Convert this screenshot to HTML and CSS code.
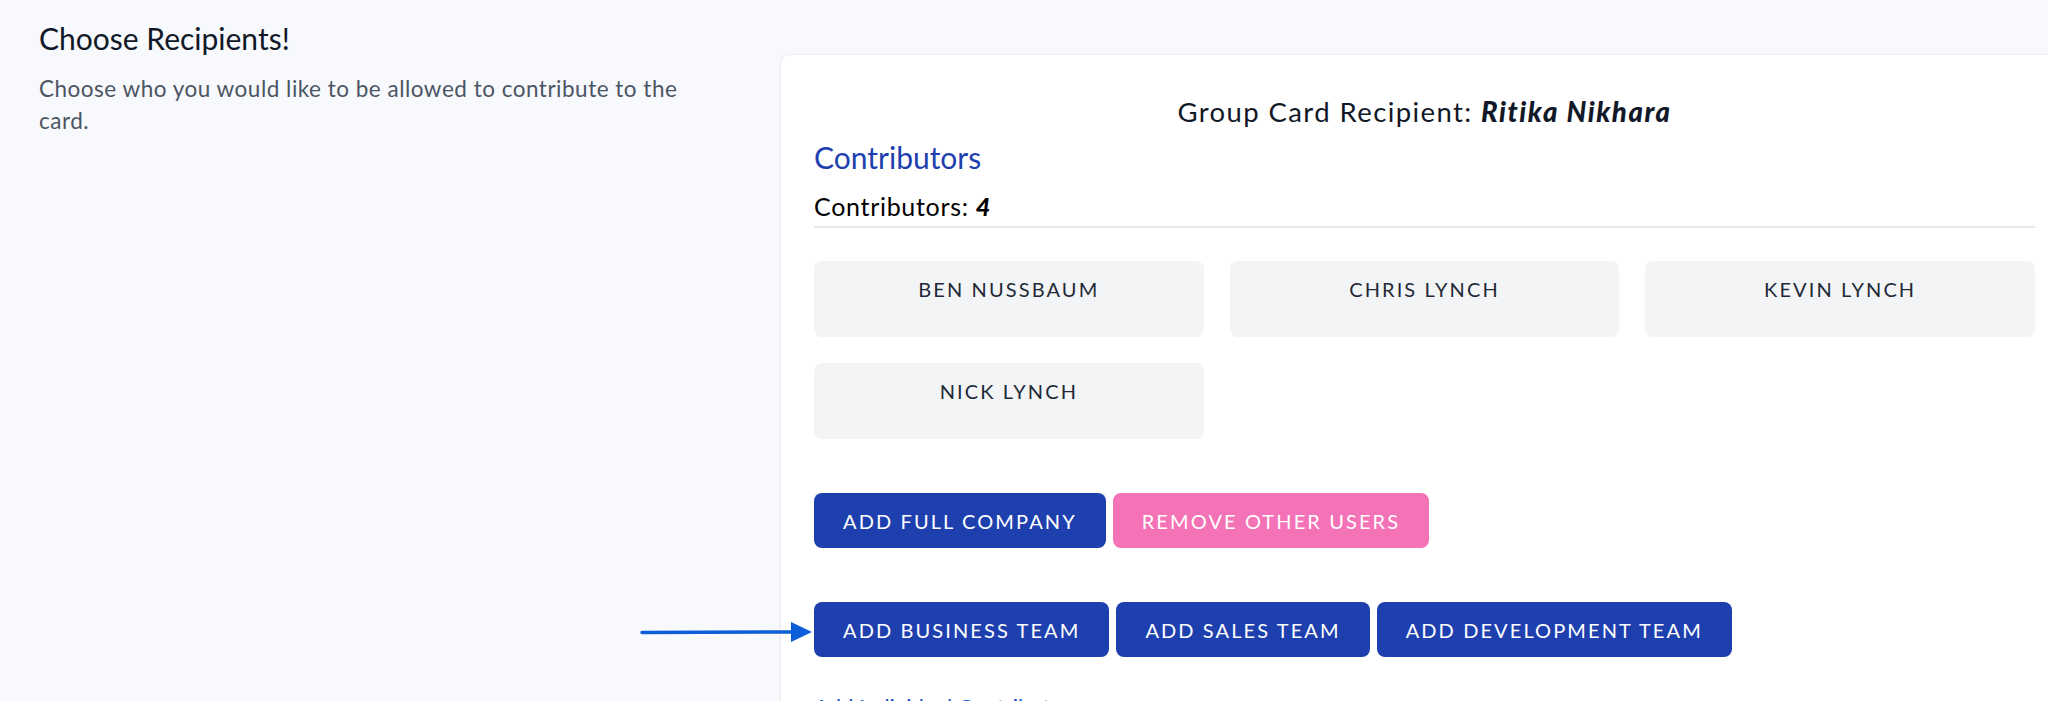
FILE: index.html
```html
<!DOCTYPE html>
<html lang="en">
<head>
<meta charset="utf-8">
<title>Choose Recipients</title>
<link rel="stylesheet" href="styles.css">
</head>
<body>
<div class="page">
  <section class="intro">
    <h2 class="intro-title">Choose Recipients!</h2>
    <p class="intro-text">Choose who you would like to be allowed to contribute to the card.</p>
  </section>

  <section class="card">
    <h3 class="recipient">Group Card Recipient: <strong>Ritika Nikhara</strong></h3>
    <h4 class="section-title">Contributors</h4>
    <div class="count">Contributors: <strong>4</strong></div>

    <div class="people">
      <div class="person">BEN NUSSBAUM</div>
      <div class="person">CHRIS LYNCH</div>
      <div class="person">KEVIN LYNCH</div>
      <div class="person">NICK LYNCH</div>
    </div>

    <div class="actions first">
      <button class="btn btn-blue">ADD FULL COMPANY</button>
      <button class="btn btn-pink">REMOVE OTHER USERS</button>
    </div>

    <div class="actions second">
      <button class="btn btn-blue">ADD BUSINESS TEAM</button>
      <button class="btn btn-blue">ADD SALES TEAM</button>
      <button class="btn btn-blue">ADD DEVELOPMENT TEAM</button>
    </div>

    <a class="more-link">Add Individual Contributors</a>
  </section>

  <svg class="pointer" width="174" height="26" viewBox="0 0 174 26" aria-hidden="true">
    <path d="M2 13.5 L154 13" stroke="#0b5ed7" stroke-width="3.5" fill="none" stroke-linecap="round"/>
    <path d="M151 3 L172 13 L151 23 Z" fill="#0b5ed7"/>
  </svg>
</div>
</body>
</html>
```

FILE: styles.css
```css
html, body {
  margin: 0;
  padding: 0;
  overflow: hidden;
}

body {
  background: #f8f9fd;
  font-family: "Lato", "Noto Sans", sans-serif;
  color: #111827;
}

.page {
  position: relative;
  display: flex;
  align-items: flex-start;
  width: 2100px;
  padding-top: 20px;
}

.intro {
  width: 781px;
  flex: none;
  box-sizing: border-box;
  padding-left: 39px;
  padding-right: 40px;
}

.intro-title {
  margin: 0;
  font-size: 30px;
  line-height: 36px;
  font-weight: 400;
  color: #111827;
}

.intro-text {
  margin: 17px 0 0;
  font-size: 22.5px;
  line-height: 32px;
  letter-spacing: 0.5px;
  color: #4b5563;
  max-width: 665px;
}

.card {
  flex: none;
  width: 1287px;
  box-sizing: border-box;
  margin-top: 35px;
  background: #ffffff;
  border-radius: 8px;
  box-shadow: 0 0 2px rgba(17, 24, 39, 0.12), 0 1px 3px rgba(17, 24, 39, 0.06);
  padding: 41px 33px 20px;
  height: 700px;
}

.recipient {
  margin: 0;
  text-align: center;
  font-size: 27.5px;
  line-height: 32px;
  letter-spacing: 1.4px;
  font-weight: 400;
  color: #111827;
}

.recipient strong {
  font-weight: 900;
  font-style: italic;
  letter-spacing: 1.6px;
}

.section-title {
  margin: 11px 0 0;
  font-size: 30px;
  line-height: 36px;
  font-weight: 400;
  color: #1e40af;
}

.count {
  margin-top: 15px;
  font-size: 25px;
  line-height: 32px;
  letter-spacing: 0.7px;
  color: #000000;
  padding-bottom: 4px;
  border-bottom: 2px solid #e5e7eb;
}

.count strong {
  font-style: italic;
  font-weight: 900;
}

.people {
  margin-top: 33px;
  display: grid;
  grid-template-columns: repeat(3, 1fr);
  gap: 26px;
}

.person {
  height: 76px;
  box-sizing: border-box;
  padding-top: 14px;
  background: #f3f4f6;
  border-radius: 8px;
  text-align: center;
  font-size: 20px;
  line-height: 28px;
  letter-spacing: 2.1px;
  color: #1f2937;
}

.actions {
  display: flex;
  gap: 7px;
}

.actions.first {
  margin-top: 54px;
}

.actions.second {
  margin-top: 54px;
}

.btn {
  border: 0;
  border-radius: 8px;
  height: 55px;
  padding: 0 29px;
  font-family: inherit;
  font-size: 20px;
  line-height: 28px;
  letter-spacing: 2.1px;
  color: #ffffff;
  cursor: pointer;
}

.btn-blue {
  background: #1e40af;
}

.btn-pink {
  background: #f472b6;
}

.more-link {
  display: block;
  margin-top: 36px;
  font-size: 22px;
  line-height: 28px;
  color: #1d4ed8;
}

.pointer {
  position: absolute;
  left: 640px;
  top: 619px;
}
```
